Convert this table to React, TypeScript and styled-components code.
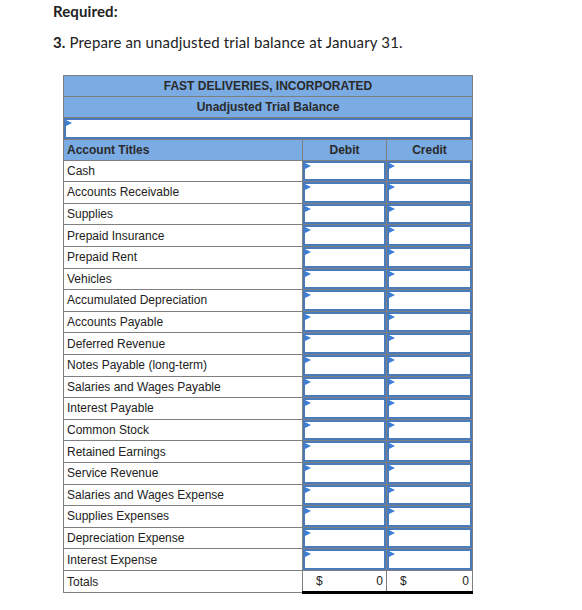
import React from "react";
import styled, { createGlobalStyle } from "styled-components";

const GlobalStyle = createGlobalStyle`
	body {
		margin: 0;
		background: #fff;
		font-family: "Liberation Sans", Arial, sans-serif;
	}
`;

const Page = styled.div`
	padding: 2px 0 0 53px;
	width: 582px;
	height: 610px;
	box-sizing: border-box;
`;

const Heading = styled.div`
	font-family: Lato, "Open Sans", sans-serif;
	font-weight: 700;
	font-size: 15px;
	color: #222;
	line-height: 18px;
	letter-spacing: 0.1px;
`;

const Prompt = styled.div`
	font-family: Lato, "Open Sans", sans-serif;
	font-size: 15px;
	color: #222;
	line-height: 18px;
	margin-top: 13px;
	letter-spacing: 0.15px;

	b {
		font-weight: 700;
	}
`;

const Table = styled.table`
	margin: 24px 0 0 10px;
	border-collapse: collapse;
	width: 409px;
	table-layout: fixed;
	font-family: "Liberation Sans", Arial, sans-serif;
	font-size: 12px;
	color: #222;
`;

const HeadCell = styled.td<{ $align?: string }>`
	background: #7aabe3;
	border: 1px solid #7f7f7f;
	height: 20px;
	padding: 0 3px;
	font-weight: 700;
	text-align: ${(p) => p.$align || "center"};
	color: #2a2a2a;
`;

const Cell = styled.td<{ $underline?: boolean }>`
	border: 1px solid #7f7f7f;
	${(p) => p.$underline && "border-bottom: 3px solid #000;"}
	height: 20.6px;
	padding: 0 3px;
	background: #fff;
`;

const InputCell = styled.td`
	border: 1px solid #7f7f7f;
	height: 20.6px;
	padding: 0;
	background: #fff;
`;

const Entry = styled.div`
	position: relative;
	box-sizing: border-box;
	height: 20.6px;
	border: 2px solid #4a7bbd;
	background: #fff;

	&::before {
		content: "";
		position: absolute;
		left: 0;
		top: 0;
		border-left: 6px solid #3b7ed8;
		border-top: 3px solid transparent;
		border-bottom: 3px solid transparent;
	}
`;

const Total = styled.div`
	display: flex;
	justify-content: space-between;
	padding: 0 0 0 10px;
`;

const accounts = [
	"Cash",
	"Accounts Receivable",
	"Supplies",
	"Prepaid Insurance",
	"Prepaid Rent",
	"Vehicles",
	"Accumulated Depreciation",
	"Accounts Payable",
	"Deferred Revenue",
	"Notes Payable (long-term)",
	"Salaries and Wages Payable",
	"Interest Payable",
	"Common Stock",
	"Retained Earnings",
	"Service Revenue",
	"Salaries and Wages Expense",
	"Supplies Expenses",
	"Depreciation Expense",
	"Interest Expense",
];

export default function App() {
	return (
		<Page>
			<GlobalStyle />
			<Heading>Required:</Heading>
			<Prompt>
				<b>3.</b> Prepare an unadjusted trial balance at January 31.
			</Prompt>
			<Table>
				<colgroup>
					<col style={{ width: 239 }} />
					<col style={{ width: 84 }} />
					<col style={{ width: 86 }} />
				</colgroup>
				<tbody>
					<tr>
						<HeadCell colSpan={3}>FAST DELIVERIES, INCORPORATED</HeadCell>
					</tr>
					<tr>
						<HeadCell colSpan={3}>Unadjusted Trial Balance</HeadCell>
					</tr>
					<tr>
						<InputCell colSpan={3}>
							<Entry />
						</InputCell>
					</tr>
					<tr>
						<HeadCell $align="left">Account Titles</HeadCell>
						<HeadCell>Debit</HeadCell>
						<HeadCell>Credit</HeadCell>
					</tr>
					{accounts.map((name) => (
						<tr key={name}>
							<Cell>{name}</Cell>
							<InputCell>
								<Entry />
							</InputCell>
							<InputCell>
								<Entry />
							</InputCell>
						</tr>
					))}
					<tr>
						<Cell>Totals</Cell>
						<Cell $underline>
							<Total>
								<span>$</span>
								<span>0</span>
							</Total>
						</Cell>
						<Cell $underline>
							<Total>
								<span>$</span>
								<span>0</span>
							</Total>
						</Cell>
					</tr>
				</tbody>
			</Table>
		</Page>
	);
}
